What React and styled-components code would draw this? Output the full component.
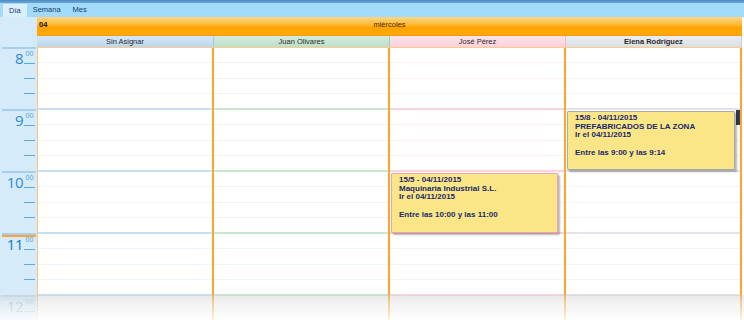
import React from 'react'
import styled, { createGlobalStyle } from 'styled-components'

const HOUR = 62
const START = 8

const resources = [
  { name: 'Sin Asignar', head: ['#d5e8f8', '#bcd6ee'], edge: '#a9c8e4', hour: '#c8def2', quarter: '#eef5fb' },
  { name: 'Juan Olivares', head: ['#d4eddd', '#bcdfc8'], edge: '#a6d0b2', hour: '#c9e7ce', quarter: '#edf7ef' },
  { name: 'José Pérez', head: ['#fee4ea', '#f9d0d9'], edge: '#efb8c4', hour: '#f9d4dc', quarter: '#fdf1f3' },
  { name: 'Elena Rodríguez', head: ['#ebeef1', '#dadfe4'], edge: '#c8ced4', hour: '#e0e3e7', quarter: '#f3f4f6', bold: true },
]

const events = [
  {
    col: 2,
    start: 10,
    height: 60,
    border: '#eea2ae',
    lines: ['15/5 - 04/11/2015', 'Maquinaria Industrial S.L.', 'Ir el 04/11/2015', '', 'Entre las 10:00 y las 11:00'],
  },
  {
    col: 3,
    start: 9,
    height: 59,
    border: '#a9a9a9',
    lines: ['15/8 - 04/11/2015', 'PREFABRICADOS DE LA ZONA', 'Ir el 04/11/2015', '', 'Entre las 9:00 y las 9:14'],
  },
]

const hours = [8, 9, 10, 11, 12]

const GlobalStyle = createGlobalStyle`
  body {
    margin: 0;
    background: #fff;
    font-family: "Liberation Sans", Arial, sans-serif;
  }
`

const Page = styled.div`
  position: relative;
  width: 744px;
  height: 320px;
  overflow: hidden;
  background: #fff;
`

const TopBar = styled.div`
  height: 3px;
  background: linear-gradient(#4d8bc2, #6aa6d8);
`

const TabStrip = styled.div`
  display: flex;
  height: 14px;
  padding-left: 3px;
  background: #a2daf9;
`

const Tab = styled.div`
  padding: 0 6px;
  margin-top: ${p => (p.$active ? '1px' : '0')};
  font-size: 7.5px;
  line-height: ${p => (p.$active ? '13px' : '14px')};
  color: #163a72;
  background: ${p => (p.$active ? '#dbeffc' : 'transparent')};
`

const Body = styled.div`
  display: flex;
`

const TimeColumn = styled.div`
  flex: 0 0 37px;
  background: #d6ebfa;
  height: 303px;
`

const TimeSpacer = styled.div`
  height: 30px;
`

const TimeHour = styled.div`
  height: ${HOUR}px;
  margin: 0 1px 0 2px;
  box-sizing: border-box;
  border-top: 2px solid #a8cfed;
  box-shadow: ${p => (p.$current ? 'inset 0 2px 0 #ffa23a' : 'none')};
  display: flex;
  flex-direction: column;
  opacity: ${p => (p.$faded ? 0.55 : 1)};
`

const TimeSlot = styled.div`
  height: ${(HOUR - 2) / 4}px;
  display: flex;
  justify-content: flex-end;
  padding-right: 1px;
`

const HourNum = styled.span`
  align-self: flex-end;
  font-family: "Open Sans", "Liberation Sans", sans-serif;
  font-size: 15px;
  line-height: 12px;
  letter-spacing: -0.5px;
  color: ${p => (p.$current ? '#1676c2' : '#2b8bd3')};
  margin-right: 1px;
`

const Minor = styled.span`
  width: 11px;
  box-sizing: border-box;
  border-bottom: ${p => (p.$hidden ? 'none' : '1px solid #5aa9e0')};
  font-size: 7px;
  line-height: 9px;
  color: #4ea1dc;
  text-align: center;
`

const Main = styled.div`
  flex: 0 0 705px;
  display: flex;
  flex-direction: column;
`

const DayHeader = styled.div`
  height: 19px;
  box-sizing: border-box;
  display: flex;
  align-items: flex-start;
  padding: 2px 2px 0;
  font-size: 7.5px;
  line-height: 11px;
  color: #4a2800;
  background: linear-gradient(#ffd587 0, #ffbb3a 40%, #ffa300 58%, #ffa90e 100%);
  border-bottom: 1px solid #f39a10;
`

const DayNumber = styled.span`
  font-weight: bold;
  color: #1a0e00;
  width: 0;
  white-space: nowrap;
`

const DayName = styled.span`
  flex: 1;
  text-align: center;
`

const ResourceRow = styled.div`
  display: grid;
  grid-template-columns: 177px 176px 176px 176px;
  height: 12px;
  box-sizing: border-box;
  border-bottom: 1px solid #ffcb8c;
`

const ResourceCell = styled.div`
  background: linear-gradient(${p => p.$top}, ${p => p.$bottom});
  border-right: 1px solid ${p => p.$edge};
  font-size: 7.5px;
  line-height: 11px;
  text-align: center;
  color: #2a2a2a;
  font-weight: ${p => (p.$bold ? 'bold' : 'normal')};
`

const Grid = styled.div`
  display: grid;
  grid-template-columns: 177px 176px 176px 176px;
`

const Column = styled.div`
  position: relative;
  border-right: 2px solid #ffa42c;
  border-left: ${p => (p.$first ? '1px solid #ffc27a' : 'none')};
`

const HourBlock = styled.div`
  height: ${HOUR}px;
  display: flex;
  flex-direction: column;
`

const Quarter = styled.div`
  flex: 1;
  box-sizing: border-box;
  border-bottom: ${p => (p.$hour ? `2px solid ${p.$hourColor}` : `1px solid ${p.$color}`)};
`

const Event = styled.div`
  position: absolute;
  left: 1px;
  width: 167px;
  box-sizing: border-box;
  padding: 2px 7px;
  background: #fae686;
  border: 1px solid ${p => p.$border};
  border-radius: 1px;
  box-shadow: 2px 2px 2px rgba(0, 0, 0, 0.28);
  font-size: 8px;
  font-weight: bold;
  line-height: 8.7px;
  color: #1a286c;
  z-index: 1;
`

const EventLine = styled.div`
  height: 8.7px;
  white-space: nowrap;
`

const OverlapMark = styled.div`
  position: absolute;
  right: 0;
  width: 4px;
  height: 15px;
  background: #2c3d52;
`

const Fade = styled.div`
  position: absolute;
  left: 0;
  right: 0;
  bottom: 0;
  height: 25px;
  z-index: 2;
  background: linear-gradient(
    rgba(205, 205, 205, 0.45) 0,
    rgba(235, 235, 235, 0.6) 35%,
    rgba(255, 255, 255, 0.85) 100%
  );
`

const App = () => {
  return (
    <Page>
      <GlobalStyle />
      <TopBar />
      <TabStrip>
        <Tab $active>Día</Tab>
        <Tab>Semana</Tab>
        <Tab>Mes</Tab>
      </TabStrip>
      <Body>
        <TimeColumn>
          <TimeSpacer />
          {hours.map(h => (
            <TimeHour key={h} $current={h === 11} $faded={h === 12}>
              {[0, 1, 2, 3].map(q => (
                <TimeSlot key={q}>
                  {q === 0 && <HourNum $current={h === 11}>{h}</HourNum>}
                  <Minor $hidden={q === 3}>{q === 0 ? '00' : ''}</Minor>
                </TimeSlot>
              ))}
            </TimeHour>
          ))}
        </TimeColumn>
        <Main>
          <DayHeader>
            <DayNumber>04</DayNumber>
            <DayName>miércoles</DayName>
          </DayHeader>
          <ResourceRow>
            {resources.map(r => (
              <ResourceCell key={r.name} $top={r.head[0]} $bottom={r.head[1]} $edge={r.edge} $bold={r.bold}>
                {r.name}
              </ResourceCell>
            ))}
          </ResourceRow>
          <Grid>
            {resources.map((r, i) => (
              <Column key={r.name} $first={i === 0}>
                {hours.map(h => (
                  <HourBlock key={h}>
                    {[0, 1, 2, 3].map(q => (
                      <Quarter key={q} $hour={q === 3} $color={r.quarter} $hourColor={r.hour} />
                    ))}
                  </HourBlock>
                ))}
                {events
                  .filter(e => e.col === i)
                  .map(e => (
                    <Event
                      key={e.lines[0]}
                      $border={e.border}
                      style={{ top: (e.start - START) * HOUR + 1, height: e.height, width: i === 3 ? 168 : 167 }}
                    >
                      {e.lines.map((l, k) => (
                        <EventLine key={k}>{l}</EventLine>
                      ))}
                    </Event>
                  ))}
                {i === 3 && <OverlapMark style={{ top: HOUR }} />}
              </Column>
            ))}
          </Grid>
        </Main>
      </Body>
      <Fade />
    </Page>
  )
}

export default App
